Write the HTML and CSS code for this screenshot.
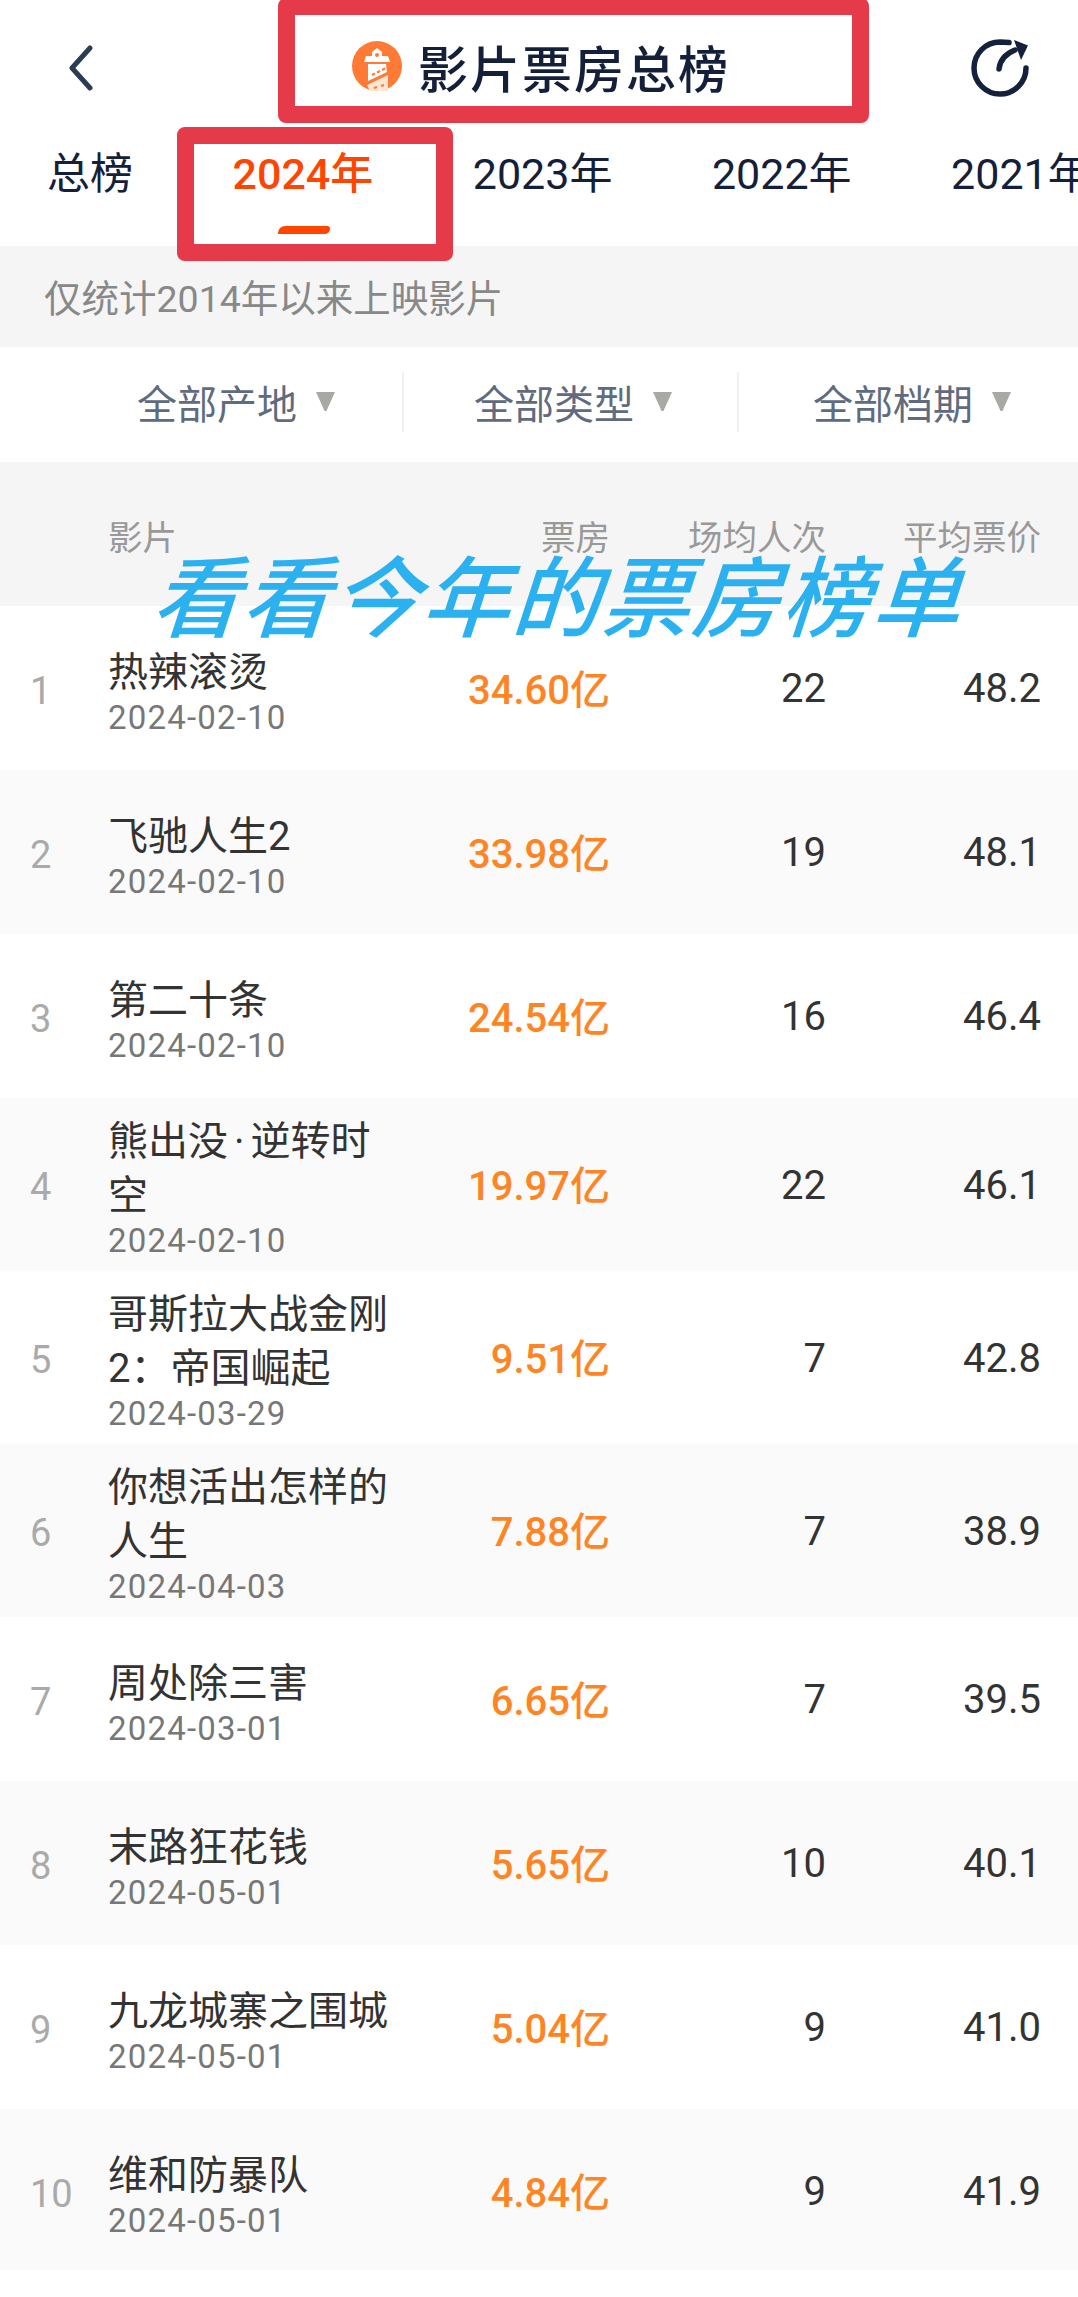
FILE: index.html
```html
<!DOCTYPE html>
<html>
  <head>
    <title>影片票房总榜</title>
    <link rel="stylesheet" href="styles.css">
  </head>
  <body>
    <div class="page">
      <div class="nav">
        <svg class="nav-back" width="24" height="46" viewBox="0 0 24 46"><path d="M21 3 L3 23 L21 43" fill="none" stroke="#2b3d52" stroke-width="5" stroke-linecap="round" stroke-linejoin="round"/></svg>
        <div class="nav-title">
          <svg class="logo" width="50" height="50" viewBox="0 0 50 50">
            <circle cx="25" cy="25" r="25" fill="#ff7a35"/>
            <path d="M25 7 L30 11 L30 15 L36 15 L38 21 L12 21 L14 15 L20 15 L20 11 Z" fill="#fff"/>
            <circle cx="25" cy="14" r="2" fill="#ff7a35"/>
            <path d="M16 23 L34 23 L35 31 L16 40 Z" fill="#fff"/>
            <path d="M15 44 L36 34 L36 50 L18 50 Z" fill="#ffe3d3"/>
            <path d="M20 34 l3 -1.500 M25 31.500 l3 -1.500 M30 29 l3 -1.500 M22 47 l3 -1 M29 45 l3 -1" stroke="#ff7a35" stroke-width="2"/>
          </svg>
          <span>影片票房总榜</span>
        </div>
        <svg class="nav-share" width="58" height="58" viewBox="0 0 58 58">
          <path d="M55 29 A26 26 0 1 1 29 3 L38 3.500" fill="none" stroke="#14213d" stroke-width="5.500" stroke-linecap="round"/>
          <path d="M28 30 C29 21 34 15 44 11" fill="none" stroke="#14213d" stroke-width="5.500" stroke-linecap="round"/>
          <path d="M43 1 L57 6.500 L50 21 Z" fill="#14213d"/>
        </svg>
      </div>

      <div class="tabs">
        <div class="tab tab-first">总榜</div>
        <div class="tab tab-active">2024年<i class="tab-line"></i></div>
        <div class="tab">2023年</div>
        <div class="tab">2022年</div>
        <div class="tab">2021年</div>
      </div>

      <div class="notice">仅统计2014年以来上映影片</div>

      <div class="filters">
        <div class="filter filter-a">全部产地<i class="arrow"></i></div>
        <div class="filter filter-b">全部类型<i class="arrow"></i></div>
        <div class="filter filter-c">全部档期<i class="arrow"></i></div>
      </div>

      <div class="grid thead">
        <div></div>
        <div>影片</div>
        <div class="num">票房</div>
        <div class="num">场均人次</div>
        <div class="num">平均票价</div>
      </div>

      <div class="grid row">
        <div class="rank">1</div>
        <div class="film"><div class="film-name">热辣滚烫</div><div class="film-date">2024-02-10</div></div>
        <div class="num money">34.60亿</div><div class="num value">22</div><div class="num value">48.2</div>
      </div>
      <div class="grid row">
        <div class="rank">2</div>
        <div class="film"><div class="film-name">飞驰人生2</div><div class="film-date">2024-02-10</div></div>
        <div class="num money">33.98亿</div><div class="num value">19</div><div class="num value">48.1</div>
      </div>
      <div class="grid row">
        <div class="rank">3</div>
        <div class="film"><div class="film-name">第二十条</div><div class="film-date">2024-02-10</div></div>
        <div class="num money">24.54亿</div><div class="num value">16</div><div class="num value">46.4</div>
      </div>
      <div class="grid row">
        <div class="rank">4</div>
        <div class="film"><div class="film-name">熊出没<span class="dot">·</span>逆转时<br>空</div><div class="film-date">2024-02-10</div></div>
        <div class="num money">19.97亿</div><div class="num value">22</div><div class="num value">46.1</div>
      </div>
      <div class="grid row">
        <div class="rank">5</div>
        <div class="film"><div class="film-name">哥斯拉大战金刚2：帝国崛起</div><div class="film-date">2024-03-29</div></div>
        <div class="num money">9.51亿</div><div class="num value">7</div><div class="num value">42.8</div>
      </div>
      <div class="grid row">
        <div class="rank">6</div>
        <div class="film"><div class="film-name">你想活出怎样的人生</div><div class="film-date">2024-04-03</div></div>
        <div class="num money">7.88亿</div><div class="num value">7</div><div class="num value">38.9</div>
      </div>
      <div class="grid row">
        <div class="rank">7</div>
        <div class="film"><div class="film-name">周处除三害</div><div class="film-date">2024-03-01</div></div>
        <div class="num money">6.65亿</div><div class="num value">7</div><div class="num value">39.5</div>
      </div>
      <div class="grid row">
        <div class="rank">8</div>
        <div class="film"><div class="film-name">末路狂花钱</div><div class="film-date">2024-05-01</div></div>
        <div class="num money">5.65亿</div><div class="num value">10</div><div class="num value">40.1</div>
      </div>
      <div class="grid row">
        <div class="rank">9</div>
        <div class="film"><div class="film-name">九龙城寨之围城</div><div class="film-date">2024-05-01</div></div>
        <div class="num money">5.04亿</div><div class="num value">9</div><div class="num value">41.0</div>
      </div>
      <div class="grid row row-last">
        <div class="rank">10</div>
        <div class="film"><div class="film-name">维和防暴队</div><div class="film-date">2024-05-01</div></div>
        <div class="num money">4.84亿</div><div class="num value">9</div><div class="num value">41.9</div>
      </div>

      <!-- marks drawn over the screenshot -->
      <div class="mark mark-title"></div>
      <div class="mark mark-tab"></div>
      <div class="caption">看看今年的票房榜单</div>
    </div>
  </body>
</html>
```

FILE: styles.css
```css
html, body {
  margin: 0;
  padding: 0;
  background: #fff;
}
.page {
  position: relative;
  width: 1078px;
  height: 2297px;
  overflow: hidden;
  font-family: Roboto, "Noto Sans CJK SC", sans-serif;
  color: #333;
}

/* top bar */
.nav {
  height: 127px;
  display: flex;
  align-items: center;
  padding: 0 49px 0 69px;
  box-sizing: border-box;
  justify-content: space-between;
}
.nav-back {
  margin-top: 8px;
}
.nav-title {
  display: flex;
  align-items: center;
  gap: 16px;
  margin-top: 4px;
  margin-left: 18px;
  font-size: 50px;
  font-weight: 500;
  letter-spacing: 2px;
  color: #14203a;
  white-space: nowrap;
}
.nav-share {
  margin-top: 8px;
}

/* year tabs */
.tabs {
  height: 119px;
  display: flex;
  gap: 99.500px;
  padding-left: 47px;
  box-sizing: border-box;
  white-space: nowrap;
}
.tab {
  position: relative;
  font-size: 43px;
  line-height: 56px;
  padding-top: 19px;
  color: #14203a;
  flex: none;
}
.tab-active {
  color: #ff4500;
  font-weight: 500;
}
.tab-line {
  position: absolute;
  left: 45px;
  top: 99px;
  width: 52px;
  height: 8px;
  background: #ff4500;
  border-radius: 8px 3px 6px 0;
}

.notice {
  height: 101px;
  line-height: 96px;
  padding: 5px 0 0 44px;
  box-sizing: border-box;
  background: #f5f5f5;
  font-size: 37.500px;
  color: #888;
}

/* filters */
.filters {
  height: 115px;
  display: flex;
  align-items: center;
}
.filter {
  height: 60px;
  display: flex;
  align-items: center;
  box-sizing: border-box;
  font-size: 40px;
  color: #5f6b7e;
  border-right: 2px solid #efefef;
  margin-top: -5px;
}
.filter-a { width: 404px; padding-left: 137px; }
.filter-b { width: 335px; padding-left: 70px; }
.filter-c { padding-left: 74px; border-right: 0; }
.arrow {
  width: 19px;
  height: 19px;
  margin-left: 19px;
  margin-top: -1px;
  background: #a8a8a4;
  clip-path: polygon(0 0, 100% 0, 55% 100%, 45% 100%);
}

/* table */
.grid {
  display: grid;
  grid-template-columns: 78px 285px 217px 216px 215px;
  padding-left: 30px;
  align-items: center;
}
.thead {
  height: 144px;
  background: #f5f5f5;
  font-size: 34.500px;
  line-height: 40px;
  color: #999;
  padding-top: 56px;
  box-sizing: border-box;
  align-items: start;
}
.num {
  text-align: right;
}
.row {
  min-height: 164px;
  padding-top: 17px;
  padding-bottom: 12px;
  box-sizing: border-box;
}
.row-last {
  min-height: 161px;
  padding-bottom: 9px;
}
.row:nth-of-type(even) {
  background: #fff;
}
.row:nth-of-type(odd) {
  background: #fafafa;
}
.rank {
  font-size: 38px;
  line-height: 50px;
  color: #aaa;
}
.film-name {
  font-size: 40px;
  line-height: 54px;
  color: #333;
}
.dot {
  margin: 0 6px;
}
.film-date {
  font-size: 33px;
  line-height: 36px;
  letter-spacing: 1.200px;
  color: #777;
}
.money {
  font-size: 40px;
  font-weight: 500;
  line-height: 50px;
  color: #ff8424;
}
.value {
  font-size: 40px;
  line-height: 50px;
  padding-bottom: 3px;
  color: #333;
}

/* overlays */
.mark {
  position: absolute;
  box-sizing: border-box;
  border: 17px solid #e53a4a;
  border-radius: 8px;
}
.mark-title {
  left: 278px;
  top: -2px;
  width: 591px;
  height: 125px;
}
.mark-tab {
  left: 177px;
  top: 127px;
  width: 276px;
  height: 134px;
}
.caption {
  position: absolute;
  left: 160px;
  top: 546px;
  font-size: 88px;
  line-height: 108px;
  letter-spacing: 2px;
  font-weight: 500;
  color: #2bb1f0;
  white-space: nowrap;
  transform: skewX(-18deg);
}
```
